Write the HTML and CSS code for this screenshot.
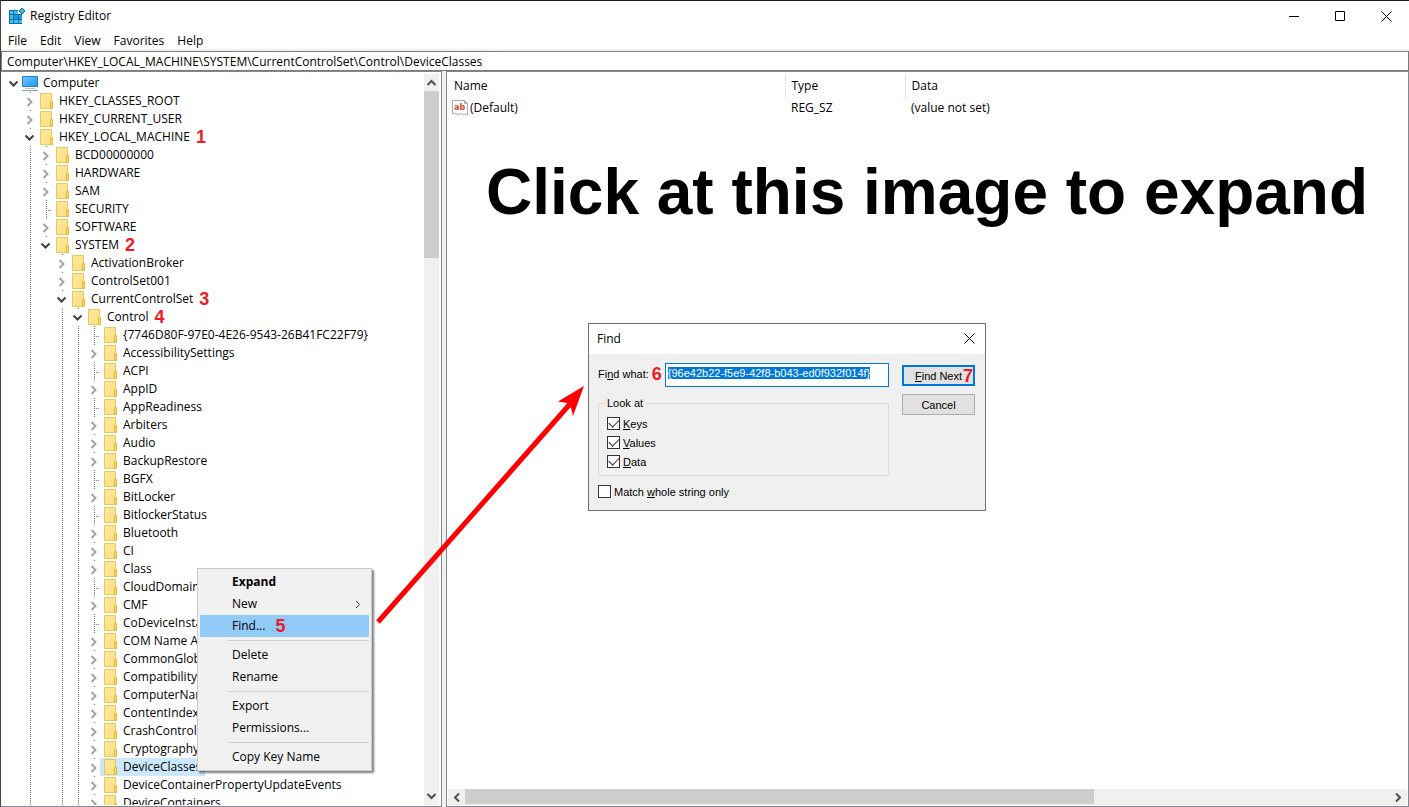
FILE: index.html
```html
<!DOCTYPE html>
<html lang="en">
<head>
<meta charset="utf-8">
<title>Registry Editor</title>
<link rel="stylesheet" href="styles.css">
</head>
<body>
<svg class="defs" width="0" height="0" aria-hidden="true">
  <defs>
    <linearGradient id="fill" x1="0" y1="0" x2="1" y2="1"><stop offset="0" stop-color="#ffe9a2"/><stop offset="1" stop-color="#fddf7c"/></linearGradient>
    <linearGradient id="screen" x1="0" y1="0" x2="1" y2="1"><stop offset="0" stop-color="#6cc8fb"/><stop offset="1" stop-color="#1d9bf0"/></linearGradient>
  </defs>
  <symbol id="folder" viewBox="0 0 16 18">
    <path d="M2.500 1.500h11v15h-11z" fill="url(#fill)" stroke="#e9c85a"/>
    <path d="M12.500 9.500h2v7h-2z" fill="#fbdc78" stroke="#e3b93c"/>
  </symbol>
  <symbol id="computer" viewBox="0 0 16 18">
    <path d="M.5 2.500h15v10H.5z" fill="url(#screen)" stroke="#2b7fb8"/>
    <path d="M3 14.500h10" stroke="#b8c8d4"/><path d="M0 16.500h16" stroke="#8fa3b3"/>
  </symbol>
  <symbol id="right" viewBox="0 0 18 18"><path d="M9.500 6l4 4-4 4" fill="none" stroke="#a3a3a3" stroke-width="2"/></symbol>
  <symbol id="down" viewBox="0 0 18 18"><path d="M7.500 7.500l4 4 4-4" fill="none" stroke="#404040" stroke-width="2"/></symbol>
</svg>

<div class="window">
  <header class="titlebar">
    <svg class="app-icon" width="17" height="17" viewBox="0 0 17 17" aria-hidden="true">
      <path d="M0 2h9v4h4v10H0z" fill="#0a6fa8"/>
      <path d="M1 3h3v3H1zM5 3h4v3H5zM1 7h3v4H1zM1 12h3v3H1zM5 12h4v3H5zM10 12h3v3h-3z" fill="#43c0ee"/>
      <path d="M5 7h4v4H5zM10 7h3v4h-3z" fill="#1f9ad6"/>
      <path d="M13 0l3 3-3 3-3-3z" fill="#3ab4e6" stroke="#0a6fa8"/>
    </svg>
    <span class="title">Registry Editor</span>
    <button class="caption" aria-label="Minimize"><svg width="11" height="11"><path d="M0 5.500h10" stroke="#000"/></svg></button>
    <button class="caption" aria-label="Maximize"><svg width="11" height="11"><path d="M.5.5h9v9h-9z" fill="none" stroke="#000"/></svg></button>
    <button class="caption" aria-label="Close"><svg width="11" height="11"><path d="M.5.5l10 10M10.500.5l-10 10" stroke="#000"/></svg></button>
  </header>
  <nav class="menubar">
    <button>File</button><button>Edit</button><button>View</button><button>Favorites</button><button>Help</button>
  </nav>
  <input class="address" aria-label="Address" value="Computer\HKEY_LOCAL_MACHINE\SYSTEM\CurrentControlSet\Control\DeviceClasses">
  <main class="panes">
    <section class="pane tree-pane">
      <div class="tree" id="tree" role="tree"></div>
      <div class="scroll vertical">
        <button aria-label="Scroll up"><svg width="9" height="7"><path d="M.5 6l4-4 4 4" fill="none" stroke="#505050" stroke-width="2"/></svg></button>
        <div class="track"><div class="thumb"></div></div>
        <button aria-label="Scroll down"><svg width="9" height="7"><path d="M.5 1l4 4 4-4" fill="none" stroke="#505050" stroke-width="2"/></svg></button>
      </div>
    </section>
    <section class="pane list-pane">
      <div class="list">
        <table class="values">
          <colgroup><col class="col-name"><col class="col-type"><col></colgroup>
          <thead><tr><th>Name</th><th>Type</th><th>Data</th></tr></thead>
          <tbody><tr>
            <td><span class="value-name"><svg width="16" height="16" viewBox="0 0 16 16" aria-hidden="true">
              <path d="M.5.5h12l3 3v11.500l-2-1-2 1-3-1.500-3 1-2-1.500-3 1z" fill="#fff" stroke="#a8a8a8"/>
              <path d="M12.500.5v3h3" fill="none" stroke="#a8a8a8"/>
              <text x="2" y="10" class="ab">ab</text></svg>(Default)</span></td>
            <td>REG_SZ</td><td>(value not set)</td>
          </tr></tbody>
        </table>
        <h1>Click at this image to expand</h1>
      </div>
      <div class="scroll horizontal">
        <button aria-label="Scroll left"><svg width="7" height="9"><path d="M6 .5l-4 4 4 4" fill="none" stroke="#505050" stroke-width="2"/></svg></button>
        <div class="track"><div class="thumb"></div></div>
        <button aria-label="Scroll right"><svg width="7" height="9"><path d="M1 .5l4 4-4 4" fill="none" stroke="#505050" stroke-width="2"/></svg></button>
      </div>
    </section>
  </main>
</div>

<div class="context" role="menu">
  <button role="menuitem" class="default">Expand</button>
  <button role="menuitem">New<svg class="sub" width="6" height="9"><path d="M1 1l3.500 3.500L1 8" fill="none" stroke="#333"/></svg></button>
  <button role="menuitem" class="active">Find...<span class="step">5</span></button>
  <hr>
  <button role="menuitem">Delete</button>
  <button role="menuitem">Rename</button>
  <hr>
  <button role="menuitem">Export</button>
  <button role="menuitem">Permissions...</button>
  <hr>
  <button role="menuitem">Copy Key Name</button>
</div>

<form class="dialog" role="dialog" aria-label="Find">
  <div class="dialog-title"><span>Find</span><button type="button" aria-label="Close"><svg width="11" height="11"><path d="M.5.5l10 10M10.500.5l-10 10" stroke="#000"/></svg></button></div>
  <div class="dialog-body">
    <div class="fields">
      <div class="find-row"><label for="what">Fi<u>n</u>d what:</label><span class="step">6</span><input id="what" value="{96e42b22-f5e9-42f8-b043-ed0f932f014f}"></div>
      <fieldset>
        <legend>Look at</legend>
        <label class="check"><input type="checkbox" checked><span><u>K</u>eys</span></label>
        <label class="check"><input type="checkbox" checked><span><u>V</u>alues</span></label>
        <label class="check"><input type="checkbox" checked><span><u>D</u>ata</span></label>
      </fieldset>
      <label class="check"><input type="checkbox"><span>Match <u>w</u>hole string only</span></label>
    </div>
    <div class="actions">
      <button type="button" class="primary"><u>F</u>ind Next<span class="step">7</span></button>
      <button type="button">Cancel</button>
    </div>
  </div>
</form>

<svg class="arrow" width="212" height="244" viewBox="0 0 212 244" aria-hidden="true">
  <path d="M2 238L194 20" stroke="#f00" stroke-width="5"/>
  <path d="M208 2L182 17.500L191 19L195 24L197 32z" fill="#f00"/>
</svg>
<script src="tree.js"></script>
</body>
</html>
```
FILE: styles.css
```css
* { box-sizing: border-box; }
body {
  margin: 0;
  position: relative;
  height: 100vh;
  overflow: hidden;
  font: 12px/18px "Open Sans", "Noto Sans", sans-serif;
  color: #000;
  background: #fff;
}
button, input { font: inherit; color: inherit; }
button { border: 0; padding: 0; background: none; }
input:focus, button:focus { outline: none; }
.defs { position: absolute; }
svg { flex: none; }

.window {
  display: flex;
  flex-direction: column;
  height: 100%;
  border-top: 1px solid #1b1b1f;
  border-left: 1px solid #45454b;
}
.titlebar { display: flex; align-items: center; height: 30px; padding-left: 8px; }
.title { flex: 1; padding-left: 4px; }
.caption { display: flex; align-items: center; justify-content: center; width: 46px; height: 30px; }
.menubar { display: flex; gap: 13px; height: 20px; padding: 1px 0 0 7px; border-bottom: 2px solid #f0f0f0; }
.menubar button { height: 18px; }
.address { height: 20px; width: 100%; border: 1px solid #7a7a7a; border-radius: 0; padding: 0 5px; }

.panes { flex: 1; min-height: 0; display: grid; grid-template-columns: 441px 1fr; gap: 4px; background: #f0f0f0; }
.pane { display: flex; min-width: 0; min-height: 0; background: #fff; border: 1px solid #828790; }
.tree-pane { padding: 2px 2px 1px 0; border-left: 0; }
.list-pane { flex-direction: column; padding: 2px 1px 1px; }

.tree { flex: 1; min-width: 0; overflow: hidden; padding-left: 1px; }
.row { display: flex; height: 18px; white-space: nowrap; }
.indent { flex: none; width: 16px; }
.line { background: repeating-linear-gradient(#808080 0 1px, transparent 1px 2px) 12px 0 / 1px 18px no-repeat; }
.expander { flex: none; width: 18px; height: 18px; }
.expander svg, .label svg { display: block; }
.leaf {
  background:
    repeating-linear-gradient(#808080 0 1px, transparent 1px 2px) 12px 0 / 1px 18px no-repeat,
    repeating-linear-gradient(90deg, #808080 0 1px, transparent 1px 2px) 12px 10px / 6px 1px no-repeat;
}
.branch { background: linear-gradient(#808080, #808080) 12px 0 / 1px 1px no-repeat; }
.label { display: flex; gap: 5px; padding: 0 4px 0 2px; }
.selected { background: #cce8ff; }
.step { font: bold 18px/18px "Liberation Sans", Arial, sans-serif; color: #ed1c24; }
.row .step { padding-left: 2px; }

.scroll { display: flex; flex: none; background: #f0f0f0; }
.scroll button { display: flex; align-items: center; justify-content: center; width: 16px; height: 16px; }
.track { flex: 1; }
.thumb { background: #cdcdcd; }
.vertical { flex-direction: column; width: 15px; }
.vertical button { height: 17px; width: 15px; }
.vertical .thumb { height: 24%; }
.horizontal { height: 16px; }
.horizontal button { width: 17px; }
.horizontal .thumb { height: 15px; width: 68%; }

.list { flex: 1; min-height: 0; overflow: hidden; }
.values { width: 100%; table-layout: fixed; border-collapse: collapse; }
.col-name { width: 337px; }
.col-type { width: 120px; }
.values th { height: 24px; padding: 0 6px; font-weight: normal; text-align: left; border-right: 1px solid #e5e5e5; }
.values th:last-child { border-right: 0; }
.values td { height: 20px; padding: 0 6px; }
.values td:first-child { padding-left: 4px; }
.value-name { display: flex; align-items: center; gap: 2px; }
.ab { font: bold 8px "DejaVu Sans", sans-serif; fill: #d9482b; }
h1 { margin: 38px 0 0 38px; font: bold 64px/72px "Liberation Sans", Arial, sans-serif; white-space: nowrap; }

.context {
  position: absolute;
  left: 197px;
  top: 568px;
  width: 175px;
  padding: 2px;
  background: #f1f1f1;
  border: 1px solid #ccc;
  box-shadow: 2px 2px 2px rgba(0, 0, 0, .5);
}
.context button { display: flex; align-items: center; width: 100%; height: 22px; padding: 0 8px 0 32px; }
.context .default { font-weight: bold; }
.context .active { background: #91c9f7; }
.context .step { padding-left: 10px; }
.context .sub { margin-left: auto; }
.context hr { margin: 3px 0 3px 28px; border: 0; height: 1px; background: #d0d0d0; }

.dialog {
  position: absolute;
  left: 588px;
  top: 323px;
  width: 398px;
  background: #f0f0f0;
  border: 1px solid #707070;
  font: 11px/14px "Liberation Sans", Arial, sans-serif;
}
.dialog-title { display: flex; align-items: center; height: 30px; padding-left: 8px; background: #fff; font: 12px/18px "Open Sans", "Noto Sans", sans-serif; }
.dialog-title button { display: flex; align-items: center; justify-content: center; width: 31px; height: 28px; margin: 0 0 2px auto; }
.dialog-body { display: flex; gap: 13px; padding: 9px 10px 9px 9px; }
.fields { flex: 1; min-width: 0; }
.find-row { display: flex; align-items: center; gap: 3px; }
.find-row label { flex: none; padding-bottom: 2px; }
.find-row .step { padding-bottom: 2px; }
.find-row input { flex: 1; min-width: 0; height: 24px; padding: 0 2px 4px; border: 1px solid #0078d7; background: #fff; border-radius: 0; }
.find-row input::selection { background: #0078d7; color: #fff; }
fieldset { margin: 9px 0 6px; padding: 4px 8px 4px; border: 1px solid #dcdcdc; min-width: 0; }
legend { margin-left: -2px; padding: 0 2px; }
.check { display: flex; align-items: center; gap: 3px; height: 19px; }
.check input {
  appearance: none;
  flex: none;
  width: 13px;
  height: 13px;
  margin: 0;
  border: 1px solid #333;
  background: #fff;
  display: grid;
  place-items: center;
}
.check input:checked::before {
  content: "";
  width: 9px;
  height: 5px;
  margin-top: -3px;
  border: solid #333;
  border-width: 0 0 1px 1px;
  transform: rotate(-45deg);
}
.actions { display: flex; flex-direction: column; gap: 8px; width: 73px; padding-top: 2px; }
.actions button { position: relative; height: 21px; background: #e1e1e1; border: 1px solid #adadad; }
.actions .primary { border: 2px solid #0078d7; }
.actions .step { position: absolute; right: 0; top: 0; }

.arrow { position: absolute; left: 376px; top: 384px; pointer-events: none; }
```
FILE: tree.js
```js
// [level, name, state, step]; state: "-" open, "+" closed, "" no children
const keys = [
  [0, "Computer", "-"],
  [1, "HKEY_CLASSES_ROOT", "+"],
  [1, "HKEY_CURRENT_USER", "+"],
  [1, "HKEY_LOCAL_MACHINE", "-", "1"],
  [2, "BCD00000000", "+"],
  [2, "HARDWARE", "+"],
  [2, "SAM", "+"],
  [2, "SECURITY", ""],
  [2, "SOFTWARE", "+"],
  [2, "SYSTEM", "-", "2"],
  [3, "ActivationBroker", "+"],
  [3, "ControlSet001", "+"],
  [3, "CurrentControlSet", "-", "3"],
  [4, "Control", "-", "4"],
  [5, "{7746D80F-97E0-4E26-9543-26B41FC22F79}", ""],
  [5, "AccessibilitySettings", "+"],
  [5, "ACPI", ""],
  [5, "AppID", "+"],
  [5, "AppReadiness", ""],
  [5, "Arbiters", "+"],
  [5, "Audio", "+"],
  [5, "BackupRestore", "+"],
  [5, "BGFX", ""],
  [5, "BitLocker", "+"],
  [5, "BitlockerStatus", ""],
  [5, "Bluetooth", "+"],
  [5, "CI", "+"],
  [5, "Class", "+"],
  [5, "CloudDomainJoin", ""],
  [5, "CMF", "+"],
  [5, "CoDeviceInstallers", ""],
  [5, "COM Name Arbiter", "+"],
  [5, "CommonGlobUserSettings", "+"],
  [5, "Compatibility", "+"],
  [5, "ComputerName", "+"],
  [5, "ContentIndex", "+"],
  [5, "CrashControl", "+"],
  [5, "Cryptography", "+"],
  [5, "DeviceClasses", "+"],
  [5, "DeviceContainerPropertyUpdateEvents", "+"],
  [5, "DeviceContainers", "+"]
];
// Levels whose sibling line continues past deeper rows
const continued = [1, 3, 4];
const icon = (id, w) => `<svg width="${w}" height="18"><use href="#${id}"/></svg>`;

document.getElementById("tree").innerHTML = keys.map(([level, name, state, step]) => {
  let html = "";
  for (let i = 0; i < level; i++) {
    html += `<span class="indent${continued.includes(i) ? " line" : ""}"></span>`;
  }
  html += state
    ? `<button class="expander${level ? " branch" : ""}" aria-label="Toggle ${name}">${icon(state === "-" ? "down" : "right", 18)}</button>`
    : `<span class="expander leaf"></span>`;
  html += `<span class="label${name === "DeviceClasses" ? " selected" : ""}">${icon(level ? "folder" : "computer", 16)}${name}</span>`;
  if (step) html += `<span class="step">${step}</span>`;
  return `<div class="row" role="treeitem">${html}</div>`;
}).join("");

const what = document.getElementById("what");
what.focus();
what.select();
```
